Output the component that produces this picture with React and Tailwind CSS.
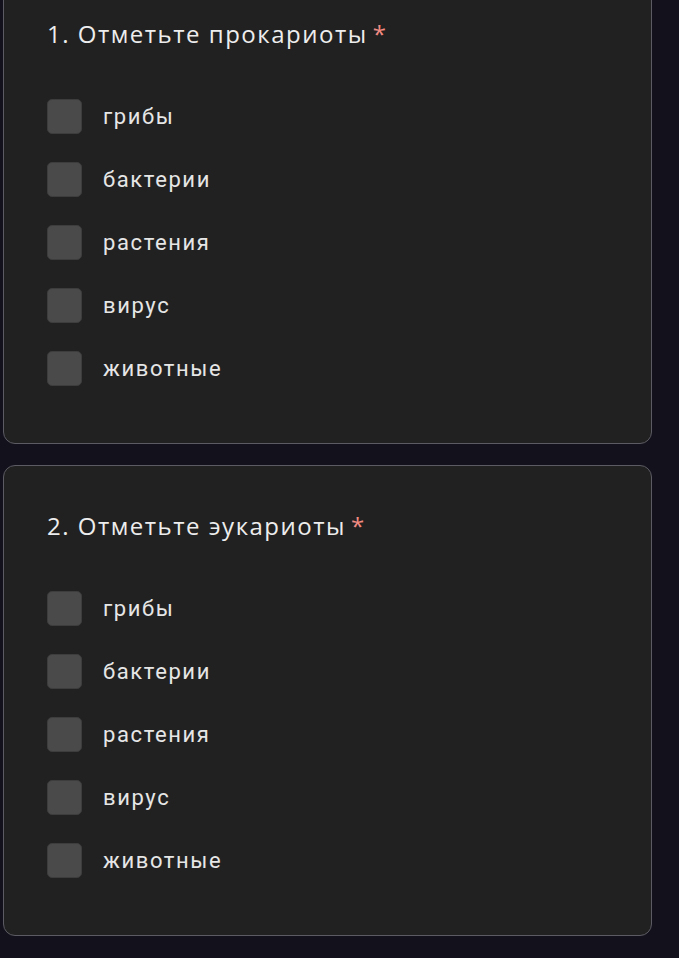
const options = ["грибы", "бактерии", "растения", "вирус", "животные"];

const questions = [
  { id: 1, title: "1. Отметьте прокариоты" },
  { id: 2, title: "2. Отметьте эукариоты" },
];

function Question({ title, first }) {
  return (
    <div
      className={`ml-[3px] mr-[27px] rounded-[12px] border border-[#5c5b63] bg-[#212121] pl-[43px] pt-[44px] pb-[43px] ${
        first ? "-mt-[27px]" : "mt-[21px]"
      }`}
    >
      <div className="h-8 text-[24px] leading-8 text-[#ededed] font-['Open_Sans',sans-serif] tracking-[1.5px]">
        {title}
        <span className="ml-[5px] text-[#f28b82]">*</span>
      </div>
      <div className="mt-[35px] flex flex-col">
        {options.map((o) => (
          <label key={o} className="flex h-[63px] items-center">
            <span className="h-[35px] w-[35px] rounded-[5px] border border-[#3d3d3d] bg-[#4a4a4a]" />
            <span className="ml-[21px] text-[22px] tracking-[1.6px] text-[#e6e6e6] font-['Roboto',sans-serif]">
              {o}
            </span>
          </label>
        ))}
      </div>
    </div>
  );
}

export default function App() {
  return (
    <div className="h-[958px] overflow-hidden bg-[#13111c]">
      {questions.map((q, i) => (
        <Question key={q.id} title={q.title} first={i === 0} />
      ))}
    </div>
  );
}
